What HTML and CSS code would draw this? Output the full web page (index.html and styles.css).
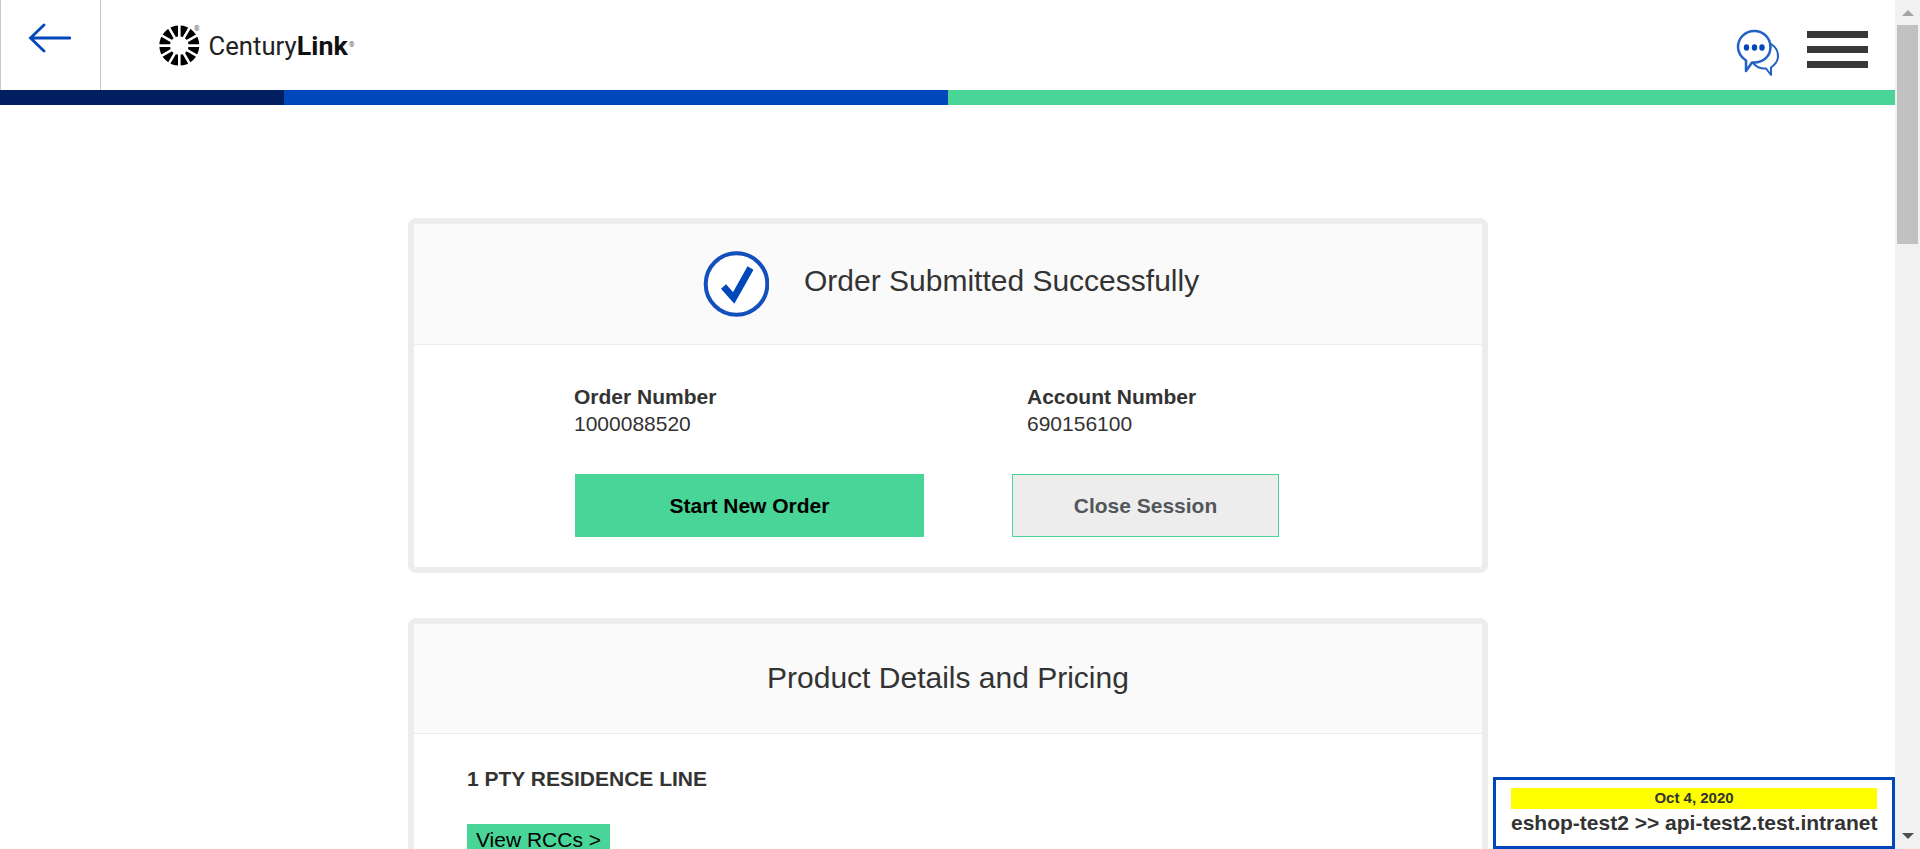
FILE: index.html
```html
<!DOCTYPE html>
<html lang="en">
<head>
<meta charset="utf-8">
<title>Order Confirmation</title>
<link rel="stylesheet" href="styles.css">
</head>
<body>
<div class="page">
  <header class="header">
    <a class="back" aria-label="Back">
      <svg width="44" height="32" viewBox="0 0 44 32"><path d="M17 3 3.5 16 17 29M3.5 16H43" fill="none" stroke="#0047bb" stroke-width="2.8" stroke-linecap="round"/></svg>
    </a>
    <svg class="logo" width="200" height="44" viewBox="157 24 200 44">
      <circle cx="179.300" cy="45.600" r="14.700" fill="none" stroke="#000" stroke-width="10.600"/>
      <g stroke="#fff" stroke-width="2.600">
        <path d="M179.300 24v43.200"/>
        <path d="M179.300 24v43.200" transform="rotate(30 179.300 45.600)"/>
        <path d="M179.300 24v43.200" transform="rotate(60 179.300 45.600)"/>
        <path d="M179.300 24v43.200" transform="rotate(90 179.300 45.600)"/>
        <path d="M179.300 24v43.200" transform="rotate(120 179.300 45.600)"/>
        <path d="M179.300 24v43.200" transform="rotate(150 179.300 45.600)"/>
      </g>
      <text class="mark" x="194" y="31">®</text>
      <text class="brand" x="208.600" y="55" textLength="88" lengthAdjust="spacingAndGlyphs">Century</text>
      <text class="brand strong" x="296.800" y="55" textLength="51" lengthAdjust="spacingAndGlyphs">Link</text>
      <text class="mark" x="349" y="47">®</text>
    </svg>
    <div class="tools">
      <svg width="44" height="48" viewBox="1736 29 44 48">
        <g fill="#fff" stroke="#2161c4" stroke-width="2" stroke-linejoin="round">
          <path d="M1771 44c5 3 7.300 7.500 7 13-.3 4.500-2.800 7.500-7 10.500v7.500l-5-6.500c-5 .5-9.500-1.500-13-5.500z"/>
          <path stroke-width="2.500" d="M1746 71v-10.500c-5-3.500-8-8-8-13.500 0-9 7.300-16 16.300-16s16.200 7 16.200 16c0 9-7 15.500-16.500 15.500h-2z"/>
        </g>
        <g fill="#0047bb"><ellipse cx="1746.500" cy="47.500" rx="2.700" ry="3.300"/><ellipse cx="1754.500" cy="47.500" rx="2.700" ry="3.300"/><ellipse cx="1762" cy="47.500" rx="2.700" ry="3.300"/></g>
      </svg>
      <div class="menu"><i></i><i></i><i></i></div>
    </div>
  </header>
  <div class="stripe"><i class="navy"></i><i class="blue"></i><i class="green"></i></div>
  <main class="main">
    <section class="card">
      <div class="card-head success">
        <svg width="66" height="66" viewBox="0 0 66 66"><circle cx="33.500" cy="33" r="30.800" fill="#fff" stroke="#1450bd" stroke-width="4"/><path d="M20.500 35.500 30.700 47 47.500 17" fill="none" stroke="#0047bb" stroke-width="6.800"/></svg>
        <h1>Order Submitted Successfully</h1>
      </div>
      <div class="order">
        <div class="field"><b>Order Number</b><span>1000088520</span></div>
        <div class="field account"><b>Account Number</b><span>690156100</span></div>
        <button class="btn primary">Start New Order</button>
        <button class="btn secondary">Close Session</button>
      </div>
    </section>
    <section class="card details">
      <div class="card-head plain"><h1>Product Details and Pricing</h1></div>
      <div class="products">
        <b>1 PTY RESIDENCE LINE</b>
        <button class="rcc">View RCCs &gt;</button>
      </div>
    </section>
  </main>
</div>
<aside class="scrollbar"><i class="up"></i><i class="thumb"></i><i class="down"></i></aside>
<div class="env"><div class="date">Oct 4, 2020</div><div class="host">eshop-test2 &gt;&gt; api-test2.test.intranet</div></div>
</body>
</html>
```
FILE: styles.css
```css
* { box-sizing: border-box; }
body { margin: 0; height: 849px; display: flex; overflow: hidden; background: #fff; color: #333; font: 21px/27px "Liberation Sans", Arial, sans-serif; }
svg { display: block; flex: none; }
.page { width: 1895px; height: 849px; overflow: hidden; }
.header { display: flex; height: 90px; }
.back { width: 101px; height: 90px; padding: 22px 0 0 26px; border: solid #c8c8c8; border-width: 0 1px; }
.logo { margin: 24px 0 0 56px; }
.brand { font: 25px Roboto, sans-serif; fill: #222; }
.strong { font-weight: 700; fill: #111; }
.mark { font: 7px Roboto, sans-serif; fill: #555; }
.tools { display: flex; gap: 27px; margin: 29px 27px 0 auto; }
.menu { display: flex; flex-direction: column; gap: 8px; width: 61px; padding-top: 2px; }
.menu i { height: 7px; background: #383838; }
.stripe { display: flex; height: 15px; }
.navy { width: 284px; background: #001e60; }
.blue { width: 664px; background: #0047bb; }
.green { flex: 1; background: #48d597; }
.main { display: flex; flex-direction: column; gap: 45px; width: 1080px; margin: 113px 0 0 408px; }
.card { height: 355px; border: 6px solid #ededed; border-radius: 8px; overflow: hidden; }
.card-head { display: flex; background: #fafafa; border-bottom: 1px solid #ededed; }
.success { height: 121px; padding: 27px 0 0 289px; gap: 35px; }
.success h1 { margin-top: 13px; }
.plain { height: 110px; justify-content: center; padding-top: 37px; }
h1 { margin: 0; font-size: 30px; line-height: 34px; font-weight: 400; }
.order { display: grid; grid-template-columns: 350px 267px; column-gap: 88px; row-gap: 37px; padding: 38px 0 0 160px; }
.field { display: flex; flex-direction: column; }
.account { padding-left: 15px; }
.btn { height: 63px; padding: 0 0 1px; border: 0; font: inherit; font-weight: 700; }
.primary { margin-left: 1px; background: #48d597; color: #000; }
.secondary { background: #ededed; border: 1px solid #48d597; color: #53565a; }
.products { display: flex; flex-direction: column; align-items: flex-start; gap: 32px; padding: 31px 0 0 53px; }
.rcc { width: 143px; height: 32px; padding: 0 0 2px; border: 0; background: #48d597; color: #000; font: inherit; }
.scrollbar { display: flex; flex-direction: column; align-items: center; width: 25px; height: 849px; background: #f1f1f1; }
.up { margin-top: 10px; border: solid transparent; border-width: 0 6px 6px; border-bottom-color: #a3a3a3; }
.thumb { width: 21px; height: 219px; margin-top: 9px; background: #c1c1c1; }
.down { margin: auto 0 10px; border: solid transparent; border-width: 6px 6px 0; border-top-color: #505050; }
.env { position: fixed; right: 25px; bottom: 0; width: 402px; height: 72px; padding: 8px 15px; border: 3px solid #0047bb; background: #fff; font-weight: 700; text-align: center; }
.date { height: 21px; background: #ff0; font-size: 15px; line-height: 20px; }
.host { line-height: 27px; white-space: nowrap; }
```
